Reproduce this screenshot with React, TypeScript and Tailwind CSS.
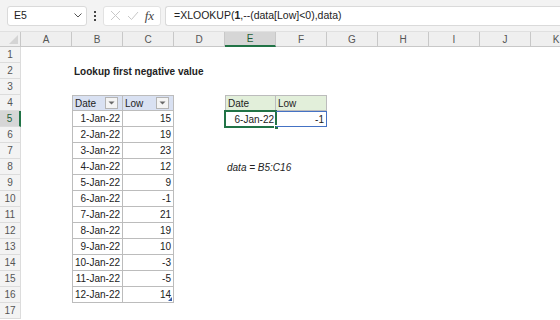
import { FC, ReactNode } from 'react';

const COLS = ['A', 'B', 'C', 'D', 'E', 'F', 'G', 'H', 'I', 'J', 'K'];
const ROWS = Array.from({ length: 17 }, (_, i) => i + 1);

const data: [string, number][] = [
  ['1-Jan-22', 15],
  ['2-Jan-22', 19],
  ['3-Jan-22', 23],
  ['4-Jan-22', 12],
  ['5-Jan-22', 9],
  ['6-Jan-22', -1],
  ['7-Jan-22', 21],
  ['8-Jan-22', 19],
  ['9-Jan-22', 10],
  ['10-Jan-22', -3],
  ['11-Jan-22', -5],
  ['12-Jan-22', 14],
];

const FilterButton: FC = () => (
  <span className="ml-auto mr-[2px] flex h-[12px] w-[13px] items-center justify-center border border-[#b4b4b4] bg-[#f4f4f4]">
    <svg width="7" height="4" viewBox="0 0 7 4">
      <path d="M0.5 0.5 L3.5 3.5 L6.5 0.5 Z" fill="#6a6a6a" />
    </svg>
  </span>
);

const Cell: FC<{ r: number; c: string }> = ({ r, c }) => {
  const base = 'relative h-[16px] flex items-center px-[2px] whitespace-nowrap';

  // table B4:C16
  if ((c === 'B' || c === 'C') && r >= 4 && r <= 16) {
    const border = `${c === 'B' ? 'border-l' : ''} border-r border-b ${r === 4 ? 'border-t' : ''} border-[#bcbcbc]`;
    if (r === 4) {
      return (
        <div className={`${base} ${border} bg-[#d9e1f2]`}>
          <span>{c === 'B' ? 'Date' : 'Low'}</span>
          <FilterButton />
        </div>
      );
    }
    const [date, low] = data[r - 5];
    return (
      <div className={`${base} ${border} justify-end`}>
        <span>{c === 'B' ? date : low}</span>
        {r === 16 && c === 'C' && (
          <svg className="absolute bottom-[1px] right-[1px]" width="4" height="4" viewBox="0 0 4 4">
            <path d="M4 0 L4 4 L0 4 Z" fill="#3a5fa8" />
          </svg>
        )}
      </div>
    );
  }

  if (r === 2 && c === 'B') {
    return (
      <div className={base}>
        <span className="font-bold">Lookup first negative value</span>
      </div>
    );
  }

  if (r === 4 && (c === 'E' || c === 'F')) {
    return (
      <div className={`${base} border-b border-r border-t border-[#bcbcbc] bg-[#e2efda] ${c === 'E' ? 'border-l' : ''}`}>
        <span>{c === 'E' ? 'Date' : 'Low'}</span>
      </div>
    );
  }

  if (r === 5 && c === 'E') {
    return (
      <div className={`${base} justify-end`}>
        <span>6-Jan-22</span>
        <div className="absolute -inset-[1px] border-2 border-[#217346]" />
        <div className="absolute -bottom-[3px] -right-[3px] h-[5px] w-[5px] border border-white bg-[#217346]" />
      </div>
    );
  }

  if (r === 5 && c === 'F') {
    return (
      <div className={`${base} justify-end border border-l-0 border-[#4472c4]`}>
        <span>-1</span>
      </div>
    );
  }

  if (r === 8 && c === 'E') {
    return (
      <div className={base}>
        <span className="italic">data = B5:C16</span>
      </div>
    );
  }

  return <div className={base} />;
};

const FormulaBar: FC = () => (
  <div className="flex h-[32px] items-center gap-[4px] border-b border-[#e0e0e0] bg-[#f3f3f3] pl-[7px]">
    <div className="flex h-[20px] w-[80px] items-center justify-between rounded-[3px] border border-[#dadada] bg-white pl-[6px] pr-[4px] text-[10.5px]">
      <span>E5</span>
      <svg width="8" height="5" viewBox="0 0 8 5">
        <path d="M0.5 0.5 L4 4 L7.5 0.5" fill="none" stroke="#555" strokeWidth="1" />
      </svg>
    </div>
    <div className="mx-[3px] flex h-[12px] flex-col justify-between py-[1px]">
      <span className="h-[2px] w-[2px] bg-[#444]" />
      <span className="h-[2px] w-[2px] bg-[#444]" />
      <span className="h-[2px] w-[2px] bg-[#444]" />
    </div>
    <div className="flex h-[20px] w-[58px] items-center justify-around rounded-[3px] border border-[#e2e2e2] bg-white px-[3px]">
      <svg width="11" height="11" viewBox="0 0 11 11">
        <path d="M1 1 L10 10 M10 1 L1 10" stroke="#c8c8c8" strokeWidth="1" />
      </svg>
      <svg width="12" height="10" viewBox="0 0 12 10">
        <path d="M1 5 L4.5 8.5 L11 1" fill="none" stroke="#c8c8c8" strokeWidth="1" />
      </svg>
      <span className="font-['Liberation_Serif',serif] text-[13px] italic text-[#444]">fx</span>
    </div>
    <div className="flex h-[20px] flex-1 items-center rounded-l-[3px] border border-r-0 border-[#dadada] bg-white pl-[8px] text-[10.5px]">
      <span>
        =XLOOKUP(<b>1</b>,--(data[Low]&lt;0),data)
      </span>
    </div>
  </div>
);

export default function App(): ReactNode {
  return (
    <div className="h-[320px] w-[560px] overflow-hidden bg-white font-['Liberation_Sans',sans-serif] text-[10px] text-[#222]">
      <FormulaBar />
      <div className="grid grid-cols-[21px_repeat(11,51px)] bg-[#efefef]">
        <div className="relative h-[15px] border-b border-r border-[#c8c8c8]">
          <svg className="absolute bottom-[2px] right-[2px]" width="9" height="9" viewBox="0 0 9 9">
            <path d="M9 0 L9 9 L0 9 Z" fill="#d4d4d4" />
          </svg>
        </div>
        {COLS.map((c) => (
          <div
            key={c}
            className={`flex h-[15px] items-center justify-center border-r text-[10px] ${
              c === 'E'
                ? 'border-b-2 border-r-[#c8c8c8] border-b-[#217346] bg-[#d6d6d6] text-[#1f5e38]'
                : 'border-b border-[#c8c8c8] text-[#555]'
            }`}
          >
            {c}
          </div>
        ))}
      </div>
      {ROWS.map((r) => (
        <div key={r} className="grid grid-cols-[21px_repeat(11,51px)]">
          <div
            className={`flex h-[16px] items-center justify-center border-b text-[10px] ${
              r === 5
                ? 'border-r-2 border-b-[#dcdcdc] border-r-[#217346] bg-[#d6d6d6] text-[#1f5e38]'
                : 'border-r border-[#dcdcdc] bg-[#f3f3f3] text-[#555]'
            }`}
          >
            {r}
          </div>
          {COLS.map((c) => (
            <Cell key={c} r={r} c={c} />
          ))}
        </div>
      ))}
    </div>
  );
}
